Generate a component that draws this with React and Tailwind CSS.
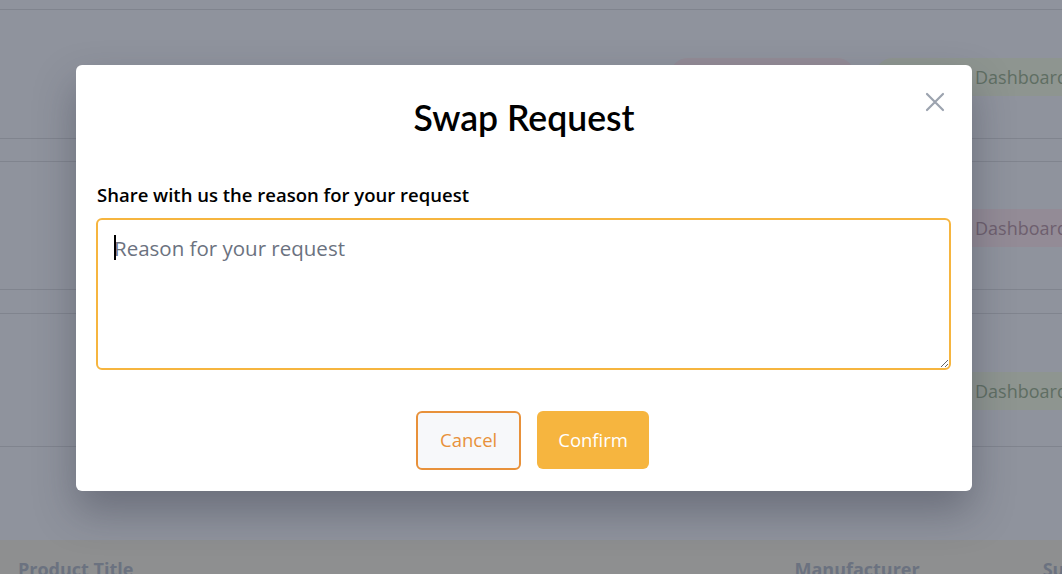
import React from "react";

export default function App() {
  return (
    <div
      className="relative h-[574px] w-[1062px] overflow-hidden bg-[#8f939d]"
      style={{ fontFamily: '"Open Sans", "Liberation Sans", sans-serif' }}
    >
      {/* background page (dimmed) */}
      <div className="flex h-full flex-col">
        <div className="h-[10px] shrink-0 border-b border-[#80848e]" />
        <div className="flex h-[129px] shrink-0 items-start gap-[20px] border-b border-[#80848e] pl-[670px] pt-[48px]">
          <div className="h-[38px] w-[185px] shrink-0 rounded-[18px] bg-[#938b96]" />
          <div className="flex h-[38px] flex-1 items-center rounded-l-[18px] bg-[#8e9590] pl-[100px] text-[18px] text-[#5f6e63] whitespace-nowrap">
            Dashboard
          </div>
        </div>
        <div className="h-[23px] shrink-0 border-b border-[#80848e]" />
        <div className="flex h-[128px] shrink-0 items-start border-b border-[#80848e] pl-[960px] pt-[47px]">
          <div className="flex h-[38px] flex-1 items-center bg-[#938b96] pl-[15px] text-[18px] text-[#6e5f6e] whitespace-nowrap">
            Dashboard
          </div>
        </div>
        <div className="h-[24px] shrink-0 border-b border-[#80848e]" />
        <div className="flex h-[133px] shrink-0 items-start border-b border-[#80848e] pl-[960px] pt-[58px]">
          <div className="flex h-[38px] flex-1 items-center bg-[#8e9590] pl-[15px] text-[18px] text-[#5f6e63] whitespace-nowrap">
            Dashboard
          </div>
        </div>
        <div className="h-[93px] shrink-0" />
        <div className="flex flex-1 items-start bg-[#8e8f90] pt-[15px] text-[18px] font-bold leading-[28px] text-[#6b7280] whitespace-nowrap">
          <div className="pl-[18px]">Product Title</div>
          <div className="pl-[661px]">Manufacturer</div>
          <div className="pl-[123px]">Su</div>
        </div>
      </div>

      {/* modal */}
      <div className="absolute left-[76px] top-[65px] flex h-[426px] w-[896px] flex-col rounded-[6px] bg-white px-[20px] shadow-[0_20px_40px_rgba(40,44,60,0.35)]">
        <button className="absolute right-[27px] top-[27px] text-[#9ca3af]">
          <svg width="20" height="20" viewBox="0 0 20 20" fill="none" stroke="currentColor" strokeWidth="2.2" strokeLinecap="round">
            <path d="M2 2 L18 18 M18 2 L2 18" />
          </svg>
        </button>
        <h2
          className="mt-[31px] text-center text-[35.5px] font-semibold leading-[44px] text-black"
          style={{ fontFamily: 'Lato, "Open Sans", sans-serif' }}
        >
          Swap Request
        </h2>
        <label className="mt-[42px] pl-[1px] text-[18.5px] font-semibold leading-[26px] text-black">
          Share with us the reason for your request
        </label>
        <div className="relative mt-[10px]">
          <textarea
            className="block h-[152px] w-[855px] rounded-[6px] border-2 border-[#f6b53f] px-[16px] py-[12px] text-[20.5px] leading-[32px] text-gray-800 outline-none placeholder:text-[#6b7280]"
            placeholder="Reason for your request"
          />
          <span className="absolute left-[18px] top-[17px] h-[25px] w-[2px] bg-black" />
        </div>
        <div className="mt-[41px] flex justify-center gap-[16px] pl-[17px]">
          <button className="h-[59px] rounded-[6px] border-2 border-[#e8913a] bg-[#f7f8fa] px-[22px] pb-[1px] text-[18.5px] text-[#e8913a]">
            Cancel
          </button>
          <button className="h-[58px] rounded-[6px] bg-[#f6b53f] px-[21px] text-[18.5px] text-white">
            Confirm
          </button>
        </div>
      </div>
    </div>
  );
}
